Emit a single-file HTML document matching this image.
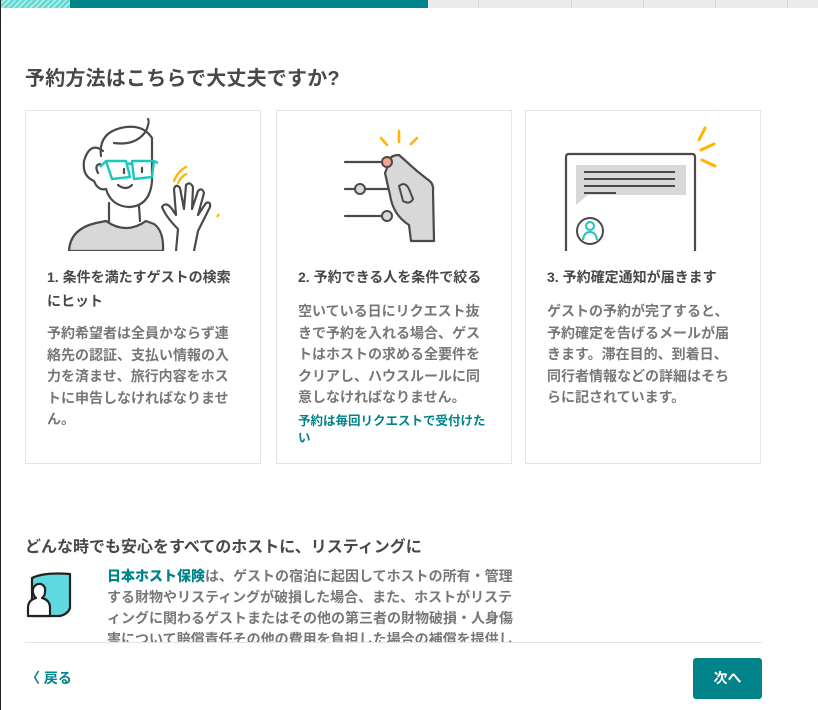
<!DOCTYPE html>
<html><head><meta charset="utf-8">
<style>
*{margin:0;padding:0;box-sizing:border-box}
body{width:818px;height:710px;overflow:hidden;background:#fff;font-family:"Liberation Sans","Noto Sans CJK JP",sans-serif;position:relative;color:#484848}
.edge{position:absolute;left:0;top:0;width:1px;height:710px;background:#222}
.bar{position:absolute;top:0;left:0;width:818px;height:8px;background:#ebebeb}
.hatch{position:absolute;left:0;top:0;width:70px;height:8px;background:repeating-linear-gradient(135deg,#5ad7d0 0 2px,#a8ebe7 2px 4px)}
.fill{position:absolute;left:70px;top:0;width:358px;height:8px;background:#00848a}
.div{position:absolute;top:0;width:1px;height:8px;background:#d8d8d8}
h1{position:absolute;left:25px;top:62px;font-size:20px;font-weight:bold;color:#484848;letter-spacing:0.2px}
.card{position:absolute;top:110px;width:236px;height:354px;border:1px solid #e4e4e4}
.card svg{position:absolute;left:0;top:0}
.t{position:absolute;left:21px;top:154px;width:200px;font-size:14px;line-height:24px;font-weight:bold;color:#484848}
.b{position:absolute;left:21px;width:200px;font-size:14px;line-height:21.5px;font-weight:bold;color:#777}
.lnk{position:absolute;left:21px;top:302px;font-size:12.5px;line-height:17px;font-weight:bold;color:#00848a}
h2{position:absolute;left:25px;top:533px;font-size:16px;font-weight:bold;color:#484848}
.ins{position:absolute;left:107px;top:566px;width:410px;height:76px;overflow:hidden;font-size:14px;line-height:21px;font-weight:bold;color:#777}
.ins b{color:#00848a}
.hr{position:absolute;left:25px;top:642px;width:737px;height:1px;background:#e4e4e4}
.back{position:absolute;left:26px;top:668px;font-size:14px;font-weight:bold;color:#00848a}
.btn{position:absolute;left:693px;top:658px;width:69px;height:41px;background:#00848a;border-radius:3px;color:#fff;font-size:14px;font-weight:bold;text-align:center;line-height:41px}
</style></head><body>
<div class="bar"><div class="hatch"></div><div class="fill"></div>
<div class="div" style="left:478px"></div><div class="div" style="left:571px"></div><div class="div" style="left:643px"></div><div class="div" style="left:715px"></div><div class="div" style="left:787px"></div></div>
<div class="edge"></div>
<h1>予約方法はこちらで大丈夫ですか?</h1>

<div class="card" style="left:25px">
<svg width="236" height="140" viewBox="0 0 236 140">
<g fill="none" stroke="#4a4a4a" stroke-width="2.2" stroke-linecap="round" stroke-linejoin="round">
<path d="M43 140 Q44 118 70 112 L80 110 Q100 124 120 110 L128 113 Q138 120 137 140 Z" fill="#d8d8d8"/>
<path d="M80 110 Q100 124 120 110" fill="#fff"/>
<path d="M83 92 L83 110 M113 95 L114 110"/>
<path d="M75 45 Q72 20 100 16 Q118 14 126 27 L126 70 Q124 95 103 96 Q85 95 80 78"/>
<path d="M77 40 Q64 30 58 50 Q56 65 68 70 Q72 80 80 78"/>
<path d="M88 32 Q110 35 120 20 Q124 10 122 8"/>
<path d="M74 53 Q68 54 72 62"/>
<path d="M92 74 Q100 80 106 74"/>
<path d="M98 58 L98 62 M116 57 L116 61"/>
<path d="M150 140 L152 118 Q140 106 136 96 Q140 90 146 98 L150 104 L148 78 Q150 72 154 77 L158 98 L160 74 Q164 70 167 76 L166 98 L172 80 Q176 76 178 82 L172 104 L180 92 Q185 90 184 96 L172 120 L168 140"/>
</g>
<path d="M80 50 L100 50 L104 66 L86 68 Z M106 50 L128 50 L126 66 L108 68 Z M100 54 Q104 51 106 54 M80 50 L74 56 M128 50 L132 52" fill="none" stroke="#1bc9bc" stroke-width="2.4" stroke-linejoin="round"/>
<path d="M148 70 Q152 60 160 56 M152 72 Q155 66 160 63" fill="none" stroke="#ffb400" stroke-width="2.2" stroke-linecap="round"/>
<path d="M191 106 L193 103" stroke="#ffb400" stroke-width="2.2"/>
</svg>
<div class="t">1. 条件を満たすゲストの検索<br>にヒット</div>
<div class="b" style="top:212px">予約希望者は全員かならず連<br>絡先の認証、支払い情報の入<br>力を済ませ、旅行内容をホス<br>トに申告しなければなりませ<br>ん。</div>
</div>

<div class="card" style="left:276px">
<svg width="236" height="140" viewBox="0 0 236 140">
<path d="M104 27 L110 34 M122 20 L122 31 M134 33 L140 27" stroke="#ffb400" stroke-width="2.6" stroke-linecap="round"/>
<g stroke="#4a4a4a" stroke-width="2.2" fill="none" stroke-linecap="round">
<path d="M68 51 L108 51 M68 78 L112 78 M68 105 L112 105"/>
</g>
<path d="M112 52 Q112 44 122 44 L140 60 L150 68 Q157 72 156 80 L157 130 L134 130 L132 114 Q116 104 113 84 L108 62 Z" fill="#d8d8d8" stroke="#4a4a4a" stroke-width="2.2" stroke-linejoin="round"/>
<path d="M122 75 Q128 70 132 78 L136 88 Q133 94 126 90 Z" fill="#d8d8d8" stroke="#4a4a4a" stroke-width="2"/>
<circle cx="110" cy="51" r="5" fill="#f7a390" stroke="#4a4a4a" stroke-width="2"/>
<circle cx="83" cy="78" r="5" fill="#d8d8d8" stroke="#4a4a4a" stroke-width="2"/>
<circle cx="110" cy="105" r="5" fill="#d8d8d8" stroke="#4a4a4a" stroke-width="2"/>
</svg>
<div class="t">2. 予約できる人を条件で絞る</div>
<div class="b" style="top:190px">空いている日にリクエスト抜<br>きで予約を入れる場合、ゲス<br>トはホストの求める全要件を<br>クリアし、ハウスルールに同<br>意しなければなりません。</div>
<div class="lnk">予約は毎回リクエストで受付けた<br>い</div>
</div>

<div class="card" style="left:525px">
<svg width="236" height="140" viewBox="0 0 236 140">
<path d="M179 17 L173 29 M175 39 L188 33 M176 49 L189 55" stroke="#ffb400" stroke-width="3" stroke-linecap="round"/>
<path d="M40 140 L40 46 Q40 43 43 43 L166 43 Q169 43 169 46 L169 140" fill="none" stroke="#4a4a4a" stroke-width="2.2"/>
<path d="M50 54 L160 54 L160 84 L62 84 L50 94 Z" fill="#d8d8d8"/>
<path d="M58 62 L149 62 M58 69 L149 69 M58 76 L149 76 M58 83 L90 83" stroke="#4a4a4a" stroke-width="2" transform="translate(0,-1)"/>
<circle cx="64" cy="120" r="13" fill="#fff" stroke="#4a4a4a" stroke-width="2"/>
<circle cx="64" cy="115" r="4" fill="none" stroke="#1bc9bc" stroke-width="2"/>
<path d="M57 129 Q58 121 64 121 Q70 121 71 129" fill="none" stroke="#1bc9bc" stroke-width="2"/>
</svg>
<div class="t">3. 予約確定通知が届きます</div>
<div class="b" style="top:190px">ゲストの予約が完了すると、<br>予約確定を告げるメールが届<br>きます。滞在目的、到着日、<br>同行者情報などの詳細はそち<br>らに記されています。</div>
</div>

<h2>どんな時でも安心をすべてのホストに、リスティングに</h2>
<svg style="position:absolute;left:24px;top:568px" width="52" height="52" viewBox="0 0 52 52">
<path d="M8 10 Q20 4 46 6 L46 40 Q44 46 36 48 L8 48 Z" fill="#5fd9e0" stroke="#222" stroke-width="2.2" stroke-linejoin="round"/>
<path d="M4 48 L4 40 Q4 32 12 30 Q8 26 9 21 Q11 15 17 16 Q22 18 21 24 Q21 28 18 30 Q26 32 26 40 L26 48 Z" fill="#fff" stroke="#222" stroke-width="2.2" stroke-linejoin="round"/>
</svg>
<div class="ins"><b>日本ホスト保険</b>は、ゲストの宿泊に起因してホストの所有・管理する財物やリスティングが破損した場合、また、ホストがリスティングに関わるゲストまたはその他の第三者の財物破損・人身傷害について賠償責任その他の費用を負担した場合の補償を提供します。</div>
<div class="hr"></div>
<div class="back">〈 戻る</div>
<div class="btn">次へ</div>
</body></html>
